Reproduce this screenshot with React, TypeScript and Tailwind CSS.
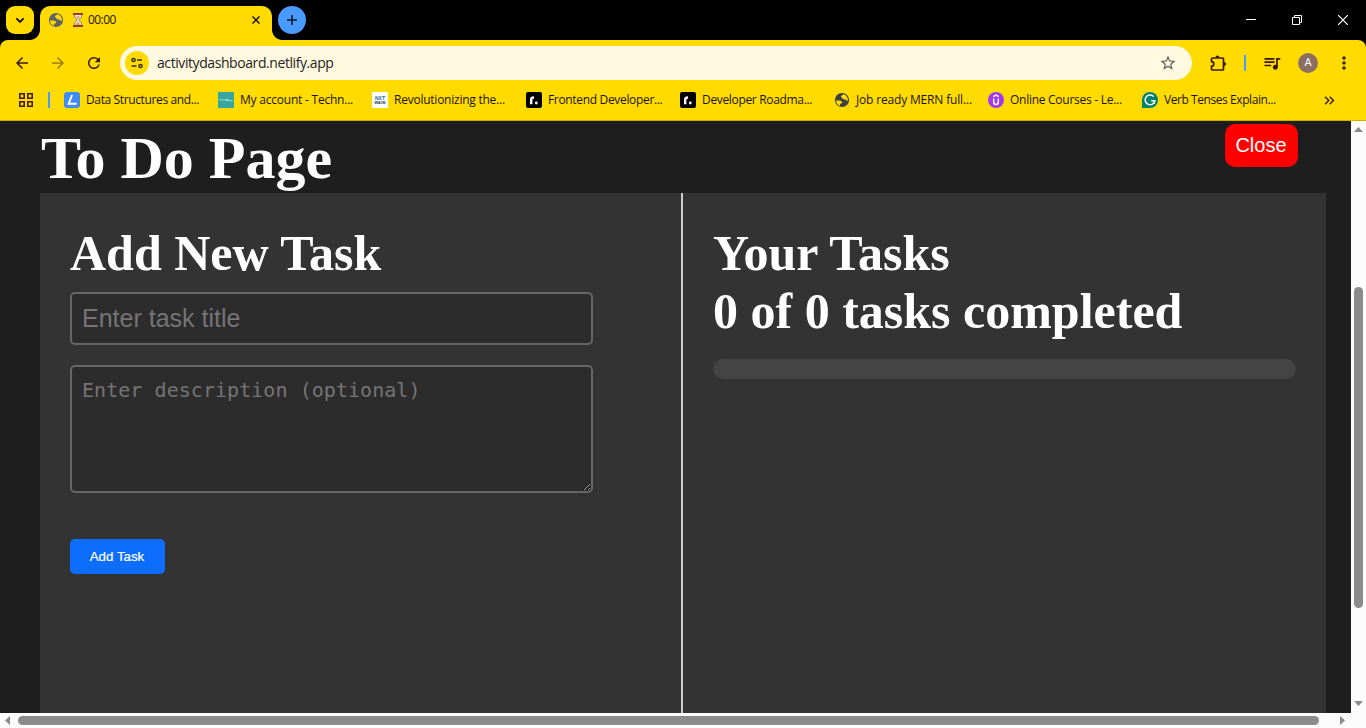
import React from "react";
import {
  MdArrowBack,
  MdArrowForward,
  MdRefresh,
  MdStarOutline,
  MdQueueMusic,
  MdMoreVert,
  MdKeyboardDoubleArrowRight,
} from "react-icons/md";

function Globe({ color }: { color: string }) {
  return (
    <svg width="16" height="16" viewBox="0 0 16 16" className="shrink-0">
      <circle cx="8" cy="8" r="7.1" fill={color} />
      <path
        d="M2 8.6c1.8-.2 3.6-.1 5 .4 1.400.5 1.500 1.700.6 2.300-.7.5-1.600.5-1.700 1.400v1.200C3.600 13 2 11 2 8.600zM9.400 2.100c-.3 1-.9 1.400-1.800 1.500-.9.2-.9 1.300-.1 1.700 1 .4.8 1.500 1.800 2 .9.5 2.300.1 3 1 .5.6 1 .9 1.500.7C14.300 5.700 12.200 2.900 9.400 2.100z"
        fill="#ffdb00"
      />
    </svg>
  );
}

function Hourglass() {
  return (
    <svg width="10" height="14" viewBox="0 0 10 14">
      <path d="M1.500 1.500h7v2.500L5.800 7l2.700 3v2.500h-7V10l2.700-3L1.500 4z" fill="#dcebf2" stroke="#a66a52" strokeWidth=".8" />
      <path d="M2.700 3.500h4.600L5 6.200zM5 8.500l2.500 3.500h-5z" fill="#e2a04b" />
      <path d="M0 0h10v2H0zM0 12h10v2H0z" fill="#9c3a29" />
    </svg>
  );
}

function PuzzleIcon() {
  return (
    <svg width="17" height="17" viewBox="0 0 17 17" className="ml-[18px]">
      <path
        d="M2.500 3h10q1 0 1 1v10q0 1-1 1h-10q-1 0-1-1v-2.700a2.300 2.300 0 0 0 0-4.600V4q0-1 1-1z"
        fill="none"
        stroke="#3a1a05"
        strokeWidth="1.700"
      />
      <path d="M5.500 2.500a2 2 0 0 1 4 0zM14 7a2 2 0 0 1 0 4z" fill="#3a1a05" />
    </svg>
  );
}

function AppsGrid() {
  return (
    <svg width="14" height="14" viewBox="0 0 14 14" fill="none" stroke="#3f1d08" strokeWidth="1.600">
      <path d="M.8.8h4.400v4.400H.8zM8.800.8h4.400v4.400H8.800zM.8 8.800h4.400v4.400H.8zM8.800 8.800h4.400v4.400H8.800z" />
    </svg>
  );
}

function RoadmapIcon() {
  return (
    <svg width="16" height="16" viewBox="0 0 16 16">
      <rect width="16" height="16" rx="2" fill="#000" />
      <path d="M5.200 12.300V7.500q0-2 2.800-2" fill="none" stroke="#fff" strokeWidth="2.400" />
      <circle cx="10.300" cy="11" r="1.400" fill="#fff" />
    </svg>
  );
}

const bookmarks: { label: string; icon: React.ReactNode; tracking: string }[] = [
  {
    label: "Data Structures and...",
    tracking: "tracking-[-0.37px]",
    icon: (
      <svg width="16" height="16" viewBox="0 0 16 16">
        <rect width="16" height="16" rx="3" fill="#3f8cf5" />
        <path d="M8 3L4.600 11.800h8" fill="none" stroke="#fff" strokeWidth="2" />
      </svg>
    ),
  },
  {
    label: "My account - Techn...",
    tracking: "tracking-[-0.22px]",
    icon: (
      <svg width="16" height="16" viewBox="0 0 16 16">
        <path d="M0 0h16v16H0z" fill="#3aa6a0" />
        <path d="M1.500 7.500l5 .6q2-2 4 0l4 1M7.500 8.500h3" fill="none" stroke="#b9e2df" strokeWidth=".8" />
      </svg>
    ),
  },
  {
    label: "Revolutionizing the...",
    tracking: "tracking-[-0.24px]",
    icon: (
      <span className="flex h-4 w-4 flex-col items-center justify-center bg-white font-['Liberation_Sans',sans-serif] text-[5px] leading-[5px] font-bold text-[#23689c]">
        <span>NXT</span>
        <span className="text-[4px] leading-[4px] text-[#173d60]">WAVE</span>
      </span>
    ),
  },
  { label: "Frontend Developer...", tracking: "tracking-[-0.33px]", icon: <RoadmapIcon /> },
  { label: "Developer Roadma...", tracking: "tracking-[-0.33px]", icon: <RoadmapIcon /> },
  { label: "Job ready MERN full...", tracking: "tracking-[-0.17px]", icon: <Globe color="#3c4043" /> },
  {
    label: "Online Courses - Le...",
    tracking: "tracking-[-0.27px]",
    icon: (
      <svg width="16" height="16" viewBox="0 0 16 16">
        <circle cx="8" cy="8" r="8" fill="#a435f0" />
        <path d="M5.300 4.700L8 3.200l2.700 1.500M5.700 6.500v3.700q0 2.200 2.300 2.200t2.300-2.200V6.500" fill="none" stroke="#fff" strokeWidth="1.500" />
      </svg>
    ),
  },
  {
    label: "Verb Tenses Explain...",
    tracking: "tracking-[-0.43px]",
    icon: (
      <svg width="16" height="16" viewBox="0 0 16 16">
        <path d="M8 0a8 8 0 1 1 0 16H0V8a8 8 0 0 1 8-8z" fill="#02826d" />
        <path d="M11.600 4.400A4.900 4.900 0 1 0 12.900 8.700H9.200M12.300 8.700v3" fill="none" stroke="#fff" strokeWidth="1.500" />
      </svg>
    ),
  },
];

function TabStrip() {
  return (
    <div className="flex h-10 shrink-0 bg-black">
      <button className="relative z-10 mt-[6px] ml-[6px] flex h-7 w-7 items-center justify-center rounded-[9px] bg-[#ffdb00]">
        <svg width="10" height="7" viewBox="0 0 10 7" fill="none" stroke="#1c1300" strokeWidth="1.900">
          <path d="M1.400 1.400L5 5l3.600-3.600" />
        </svg>
      </button>
      <div className="relative mt-[6px] ml-[6px] flex h-[34px] w-[232px] items-center rounded-t-[10px] bg-[#ffdb00] pb-[6px] pl-2">
        <span className="absolute bottom-0 -left-[10px] h-[10px] w-[10px] bg-[radial-gradient(circle_at_0_0,#000_9.5px,#ffdb00_10.2px)]" />
        <span className="absolute -right-[10px] bottom-0 h-[10px] w-[10px] bg-[radial-gradient(circle_at_100%_0,#000_9.5px,#ffdb00_10.2px)]" />
        <Globe color="#5f6368" />
        <span className="ml-[9px] flex items-center gap-[5px]">
          <Hourglass />
          <span className="text-[12px] leading-4 tracking-[-0.55px]">00:00</span>
        </span>
        <svg width="8" height="8" viewBox="0 0 8 8" className="mr-3 ml-auto" fill="none" stroke="#1c1300" strokeWidth="1.500">
          <path d="M.5.500l7 7M7.500.500l-7 7" />
        </svg>
      </div>
      <button className="relative mt-[6px] ml-[6px] flex h-7 w-7 items-center justify-center rounded-full bg-[#489afe]">
        <svg width="10" height="10" viewBox="0 0 10 10" stroke="#101820" strokeWidth="1.600">
          <path d="M5 0v10M0 5h10" />
        </svg>
      </button>
      <div className="mr-[18px] ml-auto flex items-center gap-[36px]">
        <svg width="10" height="10" viewBox="0 0 10 10" stroke="#fff">
          <path d="M0 4.500h10" />
        </svg>
        <svg width="10" height="10" viewBox="0 0 10 10" fill="none" stroke="#fff">
          <path d="M.5 2.500h7v7h-7zM2.500 2.500v-2h7v7h-2" />
        </svg>
        <svg width="10" height="10" viewBox="0 0 10 10" stroke="#fff" strokeWidth="1.200">
          <path d="M0 0l10 10M10 0L0 10" />
        </svg>
      </div>
    </div>
  );
}

function Toolbar() {
  return (
    <div className="bg-black">
      <div className="flex h-[81px] flex-col rounded-t-[8px] border-b border-[#cdb000] bg-[#ffdb00]">
        <div className="mt-[6px] flex h-[34px] items-center text-[#3a1a05]">
          <MdArrowBack size={18} className="ml-[13px]" />
          <MdArrowForward size={18} className="ml-[18px] text-[#9e7c03]" />
          <MdRefresh size={18} className="ml-[18px]" />
          <div className="ml-[17px] flex h-[34px] w-[1072px] items-center rounded-full bg-[#fff9df]">
            <span className="ml-[5px] flex h-6 w-6 items-center justify-center rounded-full bg-[#ffdb00]">
              <svg width="14" height="12" viewBox="0 0 14 12" fill="none" stroke="#3a2d08" strokeWidth="1.500">
                <circle cx="3.500" cy="3" r="1.600" />
                <path d="M7 3h5M1.500 9h5" />
                <circle cx="10.500" cy="9" r="1.600" />
              </svg>
            </span>
            <span className="ml-2 text-[14px] leading-5 tracking-[-0.42px] text-[#27221f]">activitydashboard.netlify.app</span>
            <MdStarOutline size={18} className="mr-[15px] ml-auto text-[#5f5b58]" />
          </div>
          <PuzzleIcon />
          <span className="ml-[17px] h-4 w-[2px] bg-[#489afe]" />
          <MdQueueMusic size={20} className="ml-[16px]" />
          <span className="ml-[16px] flex h-5 w-5 items-center justify-center rounded-full bg-[#8d6e63] font-['Roboto',sans-serif] text-[11px] text-white">A</span>
          <MdMoreVert size={20} className="ml-[16px]" />
        </div>
        <div className="mt-1 flex h-8 items-center">
          <span className="ml-[19px]"><AppsGrid /></span>
          <span className="ml-[15px] h-4 w-[2px] bg-[#489afe]" />
          <div className="ml-[14px] flex">
            {bookmarks.map((b) => (
              <div key={b.label} className="flex w-[154px] items-center gap-[6px]">
                {b.icon}
                <span className={`text-[12px] leading-4 whitespace-nowrap text-[#1d1300] ${b.tracking}`}>{b.label}</span>
              </div>
            ))}
          </div>
          <MdKeyboardDoubleArrowRight size={17} className="ml-[25px] text-[#3a1a05]" />
        </div>
      </div>
    </div>
  );
}

function TodoPage() {
  return (
    <main className="flex min-w-0 flex-1 flex-col bg-[#1e1e1e] px-[40px] pr-[25px] font-['Liberation_Serif',serif] text-white">
      <header className="flex h-[72px] items-start justify-between pt-[3px]">
        <h1 className="pl-px text-[60px] leading-[69px] font-bold">To Do Page</h1>
        <button className="mr-7 h-[43px] w-[73px] rounded-[10px] bg-[#ff0000] pr-[7px] pl-[6px] font-['Liberation_Sans',sans-serif] text-[20px] leading-[23px]">
          Close
        </button>
      </header>
      <div className="flex flex-1 bg-[#333]">
        <section className="flex w-[643px] flex-col items-start border-r-2 border-[#ccc] p-[30px] pt-[31px]">
          <h2 className="text-[50px] leading-[58px] font-bold">Add New Task</h2>
          <input
            placeholder="Enter task title"
            className="mt-[10px] h-[53px] w-[523px] rounded-[5px] border-2 border-[#666] bg-[#2c2c2c] p-[10px] font-['Liberation_Sans',sans-serif] text-[25px] leading-[29px] placeholder:text-[#757575]"
          />
          <textarea
            placeholder="Enter description (optional)"
            className="mt-5 h-[128px] w-[523px] rounded-[5px] border-2 border-[#666] bg-[#2c2c2c] p-[10px] font-['DejaVu_Sans_Mono',monospace] text-[20px] leading-[26px] tracking-[0.05px] placeholder:text-[#757575]"
          />
          <button className="mt-[46px] h-[35px] w-[95px] rounded-[5px] bg-[#0d6efd] pr-px font-['Liberation_Sans',sans-serif] text-[13.333px] leading-[15px] [-webkit-text-stroke:0.2px_white]">
            Add Task
          </button>
        </section>
        <section className="flex-1 p-[30px] pt-[31px]">
          <h2 className="text-[50px] leading-[58px] font-bold">Your Tasks</h2>
          <h2 className="text-[50px] leading-[58px] font-bold">0 of 0 tasks completed</h2>
          <div className="mt-[19px] h-5 rounded-[10px] bg-[#444]" />
        </section>
      </div>
    </main>
  );
}

export default function App() {
  return (
    <div className="flex h-[728px] w-[1366px] flex-col overflow-hidden bg-[#fcfcfc] font-['Open_Sans','Noto_Sans',sans-serif] text-[#1d1300]">
      <TabStrip />
      <Toolbar />
      <div className="flex h-[592px]">
        <TodoPage />
        <div className="flex w-[15px] flex-col items-center bg-[#fcfcfc] text-[#8b8b8b]">
          <svg width="9" height="5" viewBox="0 0 9 5" className="mt-[6px]" fill="currentColor">
            <path d="M4.500 0L9 5H0z" />
          </svg>
          <div className="mt-[155px] h-[321px] w-[9px] rounded-full bg-[#8b8b8b]" />
          <svg width="9" height="5" viewBox="0 0 9 5" className="mt-auto mb-[7px]" fill="currentColor">
            <path d="M4.500 5L9 0H0z" />
          </svg>
        </div>
      </div>
      <div className="flex h-[15px] items-center bg-[#fcfcfc] text-[#8b8b8b]">
        <svg width="5" height="9" viewBox="0 0 5 9" className="ml-[5px]" fill="currentColor">
          <path d="M0 4.500L5 0v9z" />
        </svg>
        <div className="ml-2 h-[9px] w-[1301px] rounded-full bg-[#8b8b8b]" />
        <svg width="5" height="9" viewBox="0 0 5 9" className="ml-[21px]" fill="currentColor">
          <path d="M5 4.500L0 0v9z" />
        </svg>
      </div>
    </div>
  );
}
